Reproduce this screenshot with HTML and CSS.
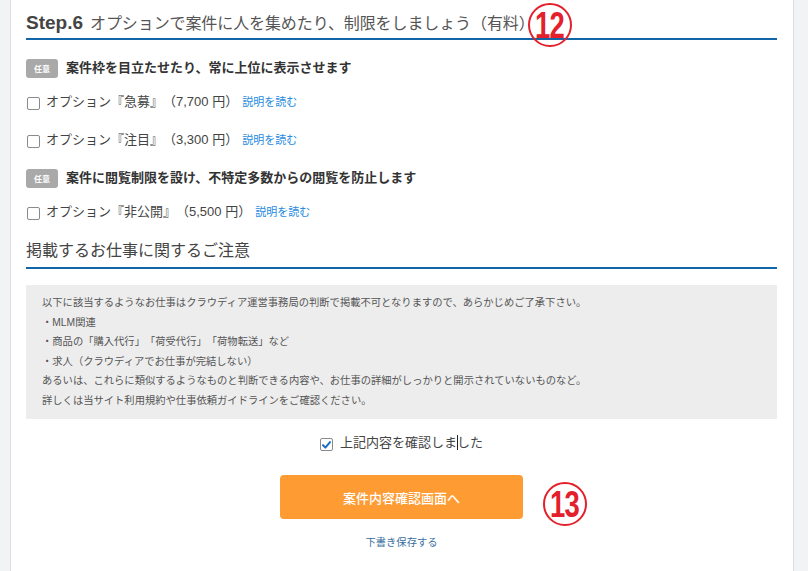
FILE: index.html
```html
<!DOCTYPE html>
<html lang="ja">
<head>
<meta charset="utf-8">
<title>Step.6</title>
<link rel="stylesheet" href="styles.css">
</head>
<body>
<div class="page">
  <aside class="side side-left"></aside>
  <main class="main">
    <h2 class="step-title"><span class="step-no">Step.6</span><span class="step-text">オプションで案件に人を集めたり、制限をしましょう（有料）</span></h2>

    <section class="opt-group">
      <div class="group-head"><span class="badge">任意</span><span class="group-title">案件枠を目立たせたり、常に上位に表示させます</span></div>
      <label class="opt"><span class="cb"></span><span class="opt-text">オプション『急募』（7,700 円）</span><a class="more" href="#">説明を読む</a></label>
      <label class="opt opt-next"><span class="cb"></span><span class="opt-text">オプション『注目』（3,300 円）</span><a class="more" href="#">説明を読む</a></label>
    </section>

    <section class="opt-group">
      <div class="group-head"><span class="badge">任意</span><span class="group-title">案件に閲覧制限を設け、不特定多数からの閲覧を防止します</span></div>
      <label class="opt"><span class="cb"></span><span class="opt-text">オプション『非公開』（5,500 円）</span><a class="more" href="#">説明を読む</a></label>
    </section>

    <h3 class="notice-title">掲載するお仕事に関するご注意</h3>
    <div class="notice">
      <p>以下に該当するようなお仕事はクラウディア運営事務局の判断で掲載不可となりますので、あらかじめご了承下さい。</p>
      <p>・MLM関連</p>
      <p>・商品の「購入代行」「荷受代行」「荷物転送」など</p>
      <p>・求人（クラウディアでお仕事が完結しない）</p>
      <p>あるいは、これらに類似するようなものと判断できる内容や、お仕事の詳細がしっかりと開示されていないものなど。</p>
      <p>詳しくは当サイト利用規約や仕事依頼ガイドラインをご確認ください。</p>
    </div>

    <label class="confirm"><span class="cb cb-checked"><svg viewBox="0 0 12 12" width="12" height="12"><path d="M2.2 6.2 L4.8 8.8 L9.8 2.8" fill="none" stroke="#1b6fc2" stroke-width="2.2" stroke-linecap="round" stroke-linejoin="round"/></svg></span><span class="confirm-text">上記内容を確認しま<span class="caret"></span>した</span></label>

    <div class="actions"><button class="btn-primary" type="button">案件内容確認画面へ</button></div>
    <div class="draft"><a href="#">下書き保存する</a></div>

    <span class="marker m12"><span class="marker-num">12</span></span>
    <span class="marker m13"><span class="marker-num">13</span></span>
  </main>
  <aside class="side side-right"></aside>
</div>
</body>
</html>
```

FILE: styles.css
```css
* { box-sizing: border-box; }
html, body { margin: 0; padding: 0; }
body {
  font-family: "Liberation Sans", "Noto Sans CJK JP", sans-serif;
  color: #444;
  background: #fff;
  text-spacing-trim: space-all;
}
.page {
  display: flex;
  min-height: 571px;
  width: 808px;
  overflow: hidden;
}
.side { background: #f2f3f5; }
.side-left { width: 11px; border-right: 1px solid #dedfe2; flex: none; }
.side-right { flex: 1; border-left: 1px solid #dedfe2; }
.main {
  position: relative;
  width: 782px;
  flex: none;
  padding: 5px 16px 0 15px;
  background: #fff;
}
.step-title {
  margin: 0;
  height: 35px;
  border-bottom: 2px solid #1266a8;
  display: flex;
  align-items: baseline;
  padding-top: 6px;
  font-weight: normal;
}
.step-no {
  font-size: 19px;
  font-weight: bold;
  color: #444;
  line-height: 24px;
}
.step-text {
  font-size: 16px;
  letter-spacing: -0.1px;
  color: #555;
  margin-left: 7px;
  line-height: 24px;
}
.opt-group { margin-top: 18px; }
.group-head {
  display: flex;
  align-items: center;
  height: 20px;
}
.badge {
  width: 32px;
  height: 19px;
  background: #a9a9a9;
  border-radius: 3px;
  color: #fff;
  font-size: 8px;
  font-weight: bold;
  display: flex;
  align-items: center;
  justify-content: center;
  flex: none;
}
.group-title {
  margin-left: 8px;
  font-size: 13px;
  font-weight: bold;
  color: #333;
  line-height: 20px;
}
.opt {
  display: flex;
  align-items: center;
  height: 20px;
  margin-top: 14px;
}
.opt-next { margin-top: 18px; }
.cb {
  width: 13px;
  height: 13px;
  border: 1px solid #8a8a8a;
  border-radius: 2px;
  background: #fff;
  margin-left: 1px;
  margin-top: 3px;
  flex: none;
  display: flex;
  align-items: center;
  justify-content: center;
}
.opt-text {
  margin-left: 6px;
  font-size: 13px;
  color: #444;
  line-height: 20px;
}
.more {
  margin-left: 4px;
  font-size: 11px;
  color: #1e8ae0;
  text-decoration: none;
  line-height: 20px;
}
.notice-title {
  margin: 17px 0 0;
  font-size: 16px;
  font-weight: normal;
  color: #444;
  line-height: 24px;
  padding-bottom: 4px;
  border-bottom: 2px solid #1266a8;
}
.notice {
  margin-top: 16px;
  background: #ededed;
  height: 134px;
  padding: 8px 16px 0;
}
.notice p {
  margin: 0;
  font-size: 10.3px;
  line-height: 19.5px;
  color: #555;
}
.confirm {
  display: flex;
  justify-content: center;
  align-items: center;
  height: 20px;
  margin-top: 14px;
}
.cb-checked { margin: 3px 0 0; }
.confirm-text {
  margin-left: 7px;
  font-size: 13px;
  color: #444;
  line-height: 20px;
}
.caret {
  display: inline-block;
  width: 0;
  height: 15px;
  border-left: 1px solid #222;
  vertical-align: -3px;
  margin-right: -1px;
}
.actions {
  display: flex;
  justify-content: center;
  margin-top: 22px;
}
.btn-primary {
  width: 243px;
  height: 44px;
  border: none;
  border-radius: 4px;
  background: #ff9b33;
  color: #fff;
  font-family: "Liberation Sans", "Noto Sans CJK JP", sans-serif;
  font-size: 13px;
  font-weight: 500;
  padding: 0;
}
.draft {
  display: flex;
  justify-content: center;
  margin-top: 16px;
  line-height: 16px;
}
.draft a {
  font-size: 10.3px;
  color: #3a6fa0;
  text-decoration: none;
}
.marker {
  position: absolute;
  width: 44px;
  height: 44px;
  border: 2px solid #e3202b;
  border-radius: 50%;
  display: flex;
  align-items: center;
  justify-content: center;
}
.marker-num {
  display: block;
  color: #e3202b;
  font-family: "Liberation Sans", sans-serif;
  font-weight: bold;
  font-size: 37px;
  line-height: 40px;
  letter-spacing: -1px;
  transform: scaleX(0.74);
  margin-top: 1px;
}
.m12 { left: 517px; top: 3px; }
.m13 { left: 532px; top: 482px; }
```
